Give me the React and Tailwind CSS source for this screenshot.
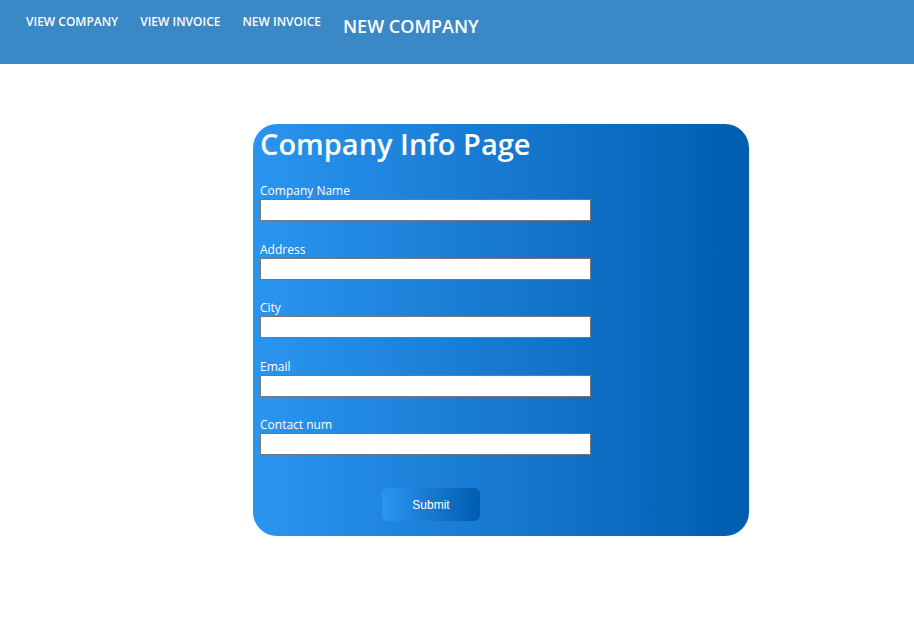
export default function App() {
  const fields = ["Company Name", "Address", "City", "Email", "Contact num"];

  return (
    <div className="min-h-screen bg-white font-['Open_Sans',sans-serif]">
      <nav className="flex h-16 items-start gap-[22px] bg-[#3a88c5] px-[26px] text-white">
        <a className="pt-[13px] text-[12px] font-semibold">VIEW COMPANY</a>
        <a className="pt-[13px] text-[12px] font-semibold">VIEW INVOICE</a>
        <a className="pt-[13px] text-[12px] font-semibold">NEW INVOICE</a>
        <a className="pt-[13px] text-[18px] font-semibold">NEW COMPANY</a>
      </nav>

      <div className="ml-[253px] mt-[60px] h-[412px] w-[496px] rounded-[24px] bg-gradient-to-r from-[#2a95f0] to-[#005db0] px-[7px] text-white">
        <h1 className="text-[29px] font-semibold leading-[40px]">Company Info Page</h1>
        <form className="mt-[19px] flex flex-col gap-[20.5px]">
          {fields.map((f) => (
            <label key={f} className="flex flex-col">
              <span className="text-[12px] leading-[16px]">{f}</span>
              <input
                type="text"
                className="h-[22px] w-[331px] border border-[#767676] bg-white px-1 text-black outline-none"
              />
            </label>
          ))}
          <div className="mt-[12.5px] pl-[122px]">
            <button
              type="button"
              className="h-[33px] w-[98px] rounded-[6px] bg-gradient-to-r from-[#2a95f0] to-[#005db0] font-['Liberation_Sans',Arial,sans-serif] text-[12px] text-white"
            >
              Submit
            </button>
          </div>
        </form>
      </div>
    </div>
  );
}
